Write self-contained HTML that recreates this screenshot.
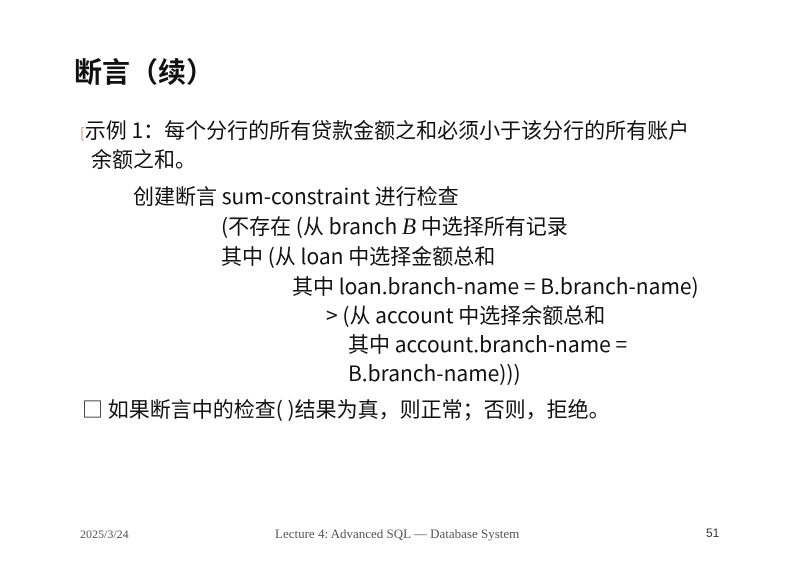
<!DOCTYPE html>
<html><head><meta charset="utf-8"><style>
body{margin:0;width:803px;height:568px;background:#fff;position:relative;overflow:hidden;font-family:"Noto Sans CJK SC","Liberation Sans",sans-serif;color:#111}
.l{position:absolute;white-space:nowrap;font-size:21px;line-height:26px}
.t{position:absolute;left:74px;top:52px;font-size:28px;font-weight:bold;line-height:38px}
.f{position:absolute;top:526px;font-family:"Liberation Serif",serif;font-size:13px;color:#555;white-space:nowrap}
</style></head><body>
<div class="t">断言（续）</div>
<div class="l" style="left:80px;top:117px"><span style="color:#c87;font-size:14px">[</span>示例 1：每个分行的所有贷款金额之和必须小于该分行的所有账户</div>
<div class="l" style="left:91px;top:146px">余额之和。</div>
<div class="l" style="left:133px;top:183px">创建断言 sum-constraint 进行检查</div>
<div class="l" style="left:221px;top:213px">(不存在 (从 branch <i style="font-family:'Liberation Serif',serif;font-size:23px">B</i> 中选择所有记录</div>
<div class="l" style="left:221px;top:243px">其中 (从 loan 中选择金额总和</div>
<div class="l" style="left:292px;top:273px">其中 loan.branch-name = B.branch-name)</div>
<div class="l" style="left:326px;top:302px">&gt; (从 account 中选择余额总和</div>
<div class="l" style="left:348px;top:331px">其中 account.branch-name =</div>
<div class="l" style="left:348px;top:360px">B.branch-name)))</div>
<div class="l" style="left:82px;top:396px">□ 如果断言中的检查( )结果为真，则正常；否则，拒绝。</div>
<div class="f" style="left:80px;font-size:12px;top:527px">2025/3/24</div>
<div class="f" style="left:275px">Lecture 4: Advanced SQL — Database System</div>
<div class="f" style="left:706px;font-family:'Liberation Sans',sans-serif;font-size:12px;color:#333">51</div>
</body></html>
